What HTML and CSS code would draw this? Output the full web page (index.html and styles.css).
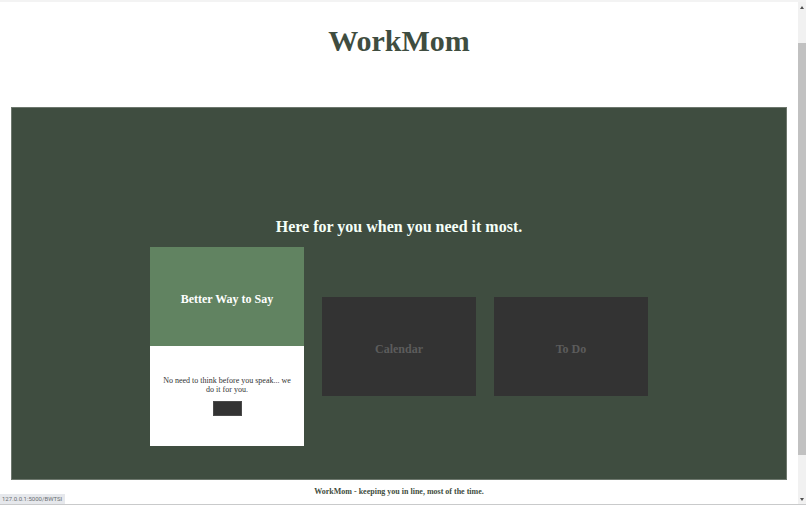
FILE: index.html
```html
<!DOCTYPE html>
<html lang="en">
<head>
<meta charset="utf-8">
<title>WorkMom</title>
<link rel="stylesheet" href="styles.css">
</head>
<body>
<div class="page">
  <header class="header"><h1>WorkMom</h1></header>
  <main class="hero">
    <h2 class="tagline">Here for you when you need it most.</h2>
    <div class="cards">
      <section class="card card-open">
        <div class="face"><h3>Better Way to Say</h3></div>
        <div class="detail">
          <p>No need to think before you speak... we do it for you.</p>
          <button class="go" type="button" aria-label="Open Better Way to Say"></button>
        </div>
      </section>
      <section class="card"><div class="face"><h3>Calendar</h3></div></section>
      <section class="card"><div class="face"><h3>To Do</h3></div></section>
    </div>
  </main>
  <footer class="footer">WorkMom - keeping you in line, most of the time.</footer>
</div>
<div class="scrollbar">
  <svg class="arrow" viewBox="0 0 4 3"><path d="M0 3 2 0 4 3z"/></svg>
  <div class="track"><div class="thumb"></div></div>
  <svg class="arrow" viewBox="0 0 4 3"><path d="M0 0 2 3 4 0z"/></svg>
</div>
<div class="status">127.0.0.1:5000/BWTSI</div>
</body>
</html>
```
FILE: styles.css
```css
* {
  box-sizing: border-box;
}

body {
  margin: 0;
  min-height: 100vh;
  display: flex;
  border-top: 2px solid #f3f3f3;
  border-bottom: 1px solid #c9cacb;
  background: #fff;
  color: #3f4d40;
  font-family: "Liberation Serif", "Times New Roman", serif;
}

h1,
h2,
h3,
p {
  margin: 0;
}

.page {
  flex: 1;
  display: flex;
  flex-direction: column;
  padding: 0 11px;
}

.header {
  padding: 22px 0 49px;
  text-align: center;
}

.header h1 {
  font-size: 30px;
  line-height: 34px;
}

.hero {
  flex: 1;
  display: flex;
  flex-direction: column;
  align-items: center;
  justify-content: flex-end;
  padding: 109px 0 33px;
  border: 1px solid #6d776d;
  background: #3f4d40;
}

.tagline {
  margin-bottom: 10px;
  color: #f5fff8;
  font-size: 16px;
  line-height: 20px;
}

.cards {
  display: flex;
  align-items: center;
  gap: 18px;
}

.card {
  width: 154px;
  text-align: center;
}

.face,
.detail {
  display: flex;
  flex-direction: column;
  align-items: center;
  justify-content: center;
}

.face {
  height: 99px;
  padding-top: 5px;
  background: #333;
  color: #5c5c5c;
}

.face h3 {
  font-size: 12px;
  line-height: 14px;
}

.card-open .face {
  background: #618361;
  color: #fff;
}

.detail {
  height: 100px;
  gap: 7px;
  padding: 0 12px;
  background: #fff;
  color: #333;
}

.detail p {
  font-size: 8px;
  line-height: 9px;
}

.go {
  width: 29px;
  height: 15px;
  padding: 0;
  border: 1px solid #4a4a4a;
  background: #333;
}

.footer {
  padding: 7px 0;
  text-align: center;
  font-size: 8px;
  font-weight: bold;
  line-height: 10px;
}

.scrollbar {
  width: 8px;
  display: flex;
  flex-direction: column;
  align-items: center;
  padding: 4px 0 3px;
  background: #f1f1f1;
}

.arrow {
  width: 4px;
  height: 3px;
  fill: #505050;
}

.track {
  flex: 1;
  align-self: stretch;
  padding: 34px 0 43px;
  display: flex;
}

.thumb {
  flex: 1;
  background: #c1c1c1;
}

.status {
  position: fixed;
  left: 0;
  bottom: 1px;
  padding: 0 3px 0 2px;
  background: #e6e8ec;
  color: #6b6e72;
  font-family: Roboto, sans-serif;
  font-size: 6px;
  line-height: 10px;
}
```
